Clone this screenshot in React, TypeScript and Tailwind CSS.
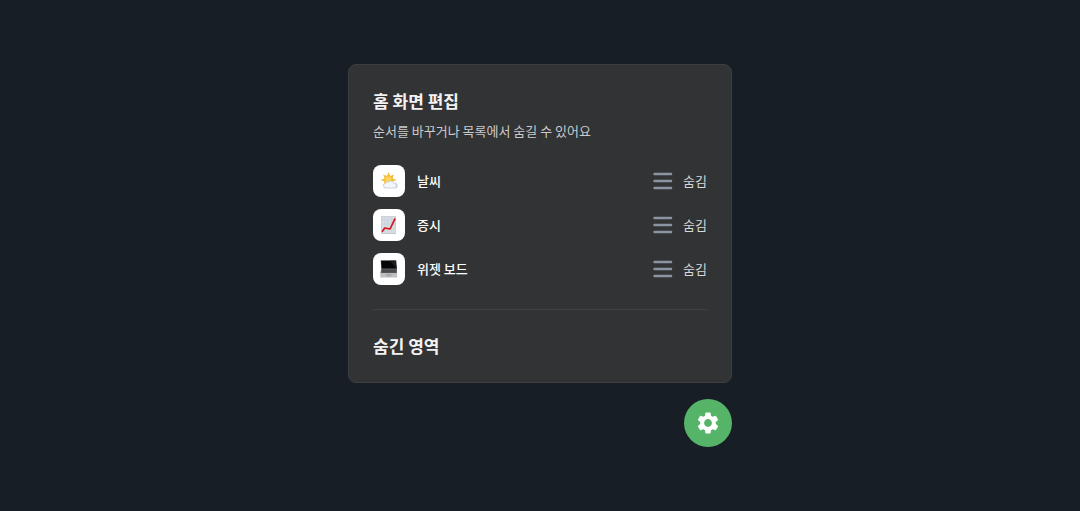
import { useState } from 'react';
import type { ReactNode } from 'react';
import { MdSettings } from 'react-icons/md';

type Widget = {
  id: string;
  name: string;
  icon: ReactNode;
};

const WeatherIcon = () => (
  <svg viewBox="0 0 18 18" className="h-4.5 w-4.5" aria-hidden="true">
    <path
      fill="#f3b43e"
      d="M8.6 0 10.1 4.3 14.1 2.5 12.3 6.5 16.6 8 12.3 9.5 14.1 13.5 10.1 11.7 8.6 16 7.1 11.7 3.1 13.5 4.9 9.5 0.6 8 4.9 6.5 3.1 2.5 7.1 4.3Z"
    />
    <circle cx="8.6" cy="8" r="4.7" fill="#fabf35" />
    <circle cx="8.2" cy="7.4" r="3" fill="#fdd35a" />
    <path
      fill="#ccd3de"
      d="M5.4 16.6a2.7 2.7 0 0 1-.2-5.3 2.2 2.2 0 0 1 2.6-1.1 3.4 3.4 0 0 1 6.2.6 2.95 2.95 0 0 1 1.4 5.8Z"
    />
    <path
      fill="#f3f6fa"
      d="M5.4 15.6a2.1 2.1 0 0 1 .2-4 2.1 2.1 0 0 1 2.7-.8 3 3 0 0 1 5.2.8 2.3 2.3 0 0 1 1.6 4Z"
    />
  </svg>
);

const StockIcon = () => (
  <svg viewBox="0 0 18 18" className="h-4.5 w-4.5" aria-hidden="true">
    <rect x="1" y="0" width="15" height="18" fill="#c5cbd1" />
    <rect x="1.6" y="0.6" width="13.8" height="16.4" fill="#d6dce2" />
    <path d="M4.5 0v17M8 0v17M11.5 0v17M1 4h15M1 8h15M1 12h15" stroke="#c6d0da" strokeWidth="0.5" />
    <path d="M2 15.8 4.8 12 10 13 15.2 2.4" fill="none" stroke="#d5161f" strokeWidth="1.7" strokeLinejoin="round" />
  </svg>
);

const LaptopIcon = () => (
  <svg viewBox="0 0 18 18" className="h-4.5 w-4.5" aria-hidden="true">
    <path d="M0.7 0.4h15.6l.7 8.6H1.4Z" fill="#3c3d40" />
    <path d="M1.3 0.8h14.5l.5 7.7H1.9Z" fill="#060607" />
    <path d="M10 0.8h5.8l.5 7.7Z" fill="#1d1e20" />
    <path d="M1.2 8.8H17v4.6H.4Z" fill="#6b6c6f" />
    <path d="M2 9.6h14.2v3H1.6Z" fill="#3f4042" />
    <path d="M1.8 11h14.4" stroke="#737477" strokeWidth="0.4" />
    <path d="M.4 13.2H17l.2 4.2H.2Z" fill="#bfc0c2" />
    <path d="M6 13.8h5.4l.2 2.6H5.8Z" fill="#aaabad" />
  </svg>
);

const HandleIcon = () => (
  <svg viewBox="0 0 24 24" className="h-6 w-6" fill="none" stroke="#8b95a1" strokeWidth="2.4" strokeLinecap="round" aria-hidden="true">
    <path d="M3.5 5h16.6M3.5 12h16.6M3.5 19h16.6" />
  </svg>
);

const widgets: Widget[] = [
  { id: 'weather', name: '날씨', icon: <WeatherIcon /> },
  { id: 'stock', name: '증시', icon: <StockIcon /> },
  { id: 'board', name: '위젯 보드', icon: <LaptopIcon /> },
];

export default function App() {
  const [hidden, setHidden] = useState<string[]>([]);

  const toggle = (id: string) => {
    setHidden((prev) => (prev.includes(id) ? prev.filter((v) => v !== id) : [...prev, id]));
  };

  const renderRow = (widget: Widget, label: string) => (
    <li key={widget.id} className="flex items-center">
      <span className="flex h-8 w-8 items-center justify-center rounded-lg bg-white">{widget.icon}</span>
      <span className="ml-3 flex-1 text-[13px] leading-5 font-medium text-white">{widget.name}</span>
      <button type="button" aria-label={`${widget.name} 순서 변경`} className="cursor-grab">
        <HandleIcon />
      </button>
      <button
        type="button"
        onClick={() => toggle(widget.id)}
        className="ml-2 cursor-pointer text-[13px] leading-5 text-[#d6d7d9]"
      >
        {label}
      </button>
    </li>
  );

  const hiddenWidgets = widgets.filter((w) => hidden.includes(w.id));

  return (
    <main className="flex min-h-screen flex-col items-center bg-[#171e25] px-4 py-16 font-['Noto_Sans_CJK_KR',sans-serif]">
      <div className="w-full max-w-96">
        <section className="rounded-lg border border-[#3c3d3e] bg-[#323335] p-6">
          <h1 className="text-[17px] leading-6 font-bold text-[#f2f2f3]">홈 화면 편집</h1>
          <p className="mt-2 text-[13px] leading-5 text-[#c9cacc]">순서를 바꾸거나 목록에서 숨길 수 있어요</p>

          <ul className="mt-6 flex flex-col gap-3">
            {widgets.filter((w) => !hidden.includes(w.id)).map((w) => renderRow(w, '숨김'))}
          </ul>

          <hr className="my-6 border-t border-[#3f4041]" />

          <h2 className="text-[17px] leading-6 font-bold text-[#f2f2f3]">숨긴 영역</h2>
          {hiddenWidgets.length > 0 && (
            <ul className="mt-6 flex flex-col gap-3">{hiddenWidgets.map((w) => renderRow(w, '추가'))}</ul>
          )}
        </section>

        <div className="mt-4 flex justify-end">
          <button
            type="button"
            aria-label="설정"
            className="flex h-12 w-12 cursor-pointer items-center justify-center rounded-full bg-[#55b467] text-white"
          >
            <MdSettings className="h-[26px] w-[26px]" />
          </button>
        </div>
      </div>
    </main>
  );
}
